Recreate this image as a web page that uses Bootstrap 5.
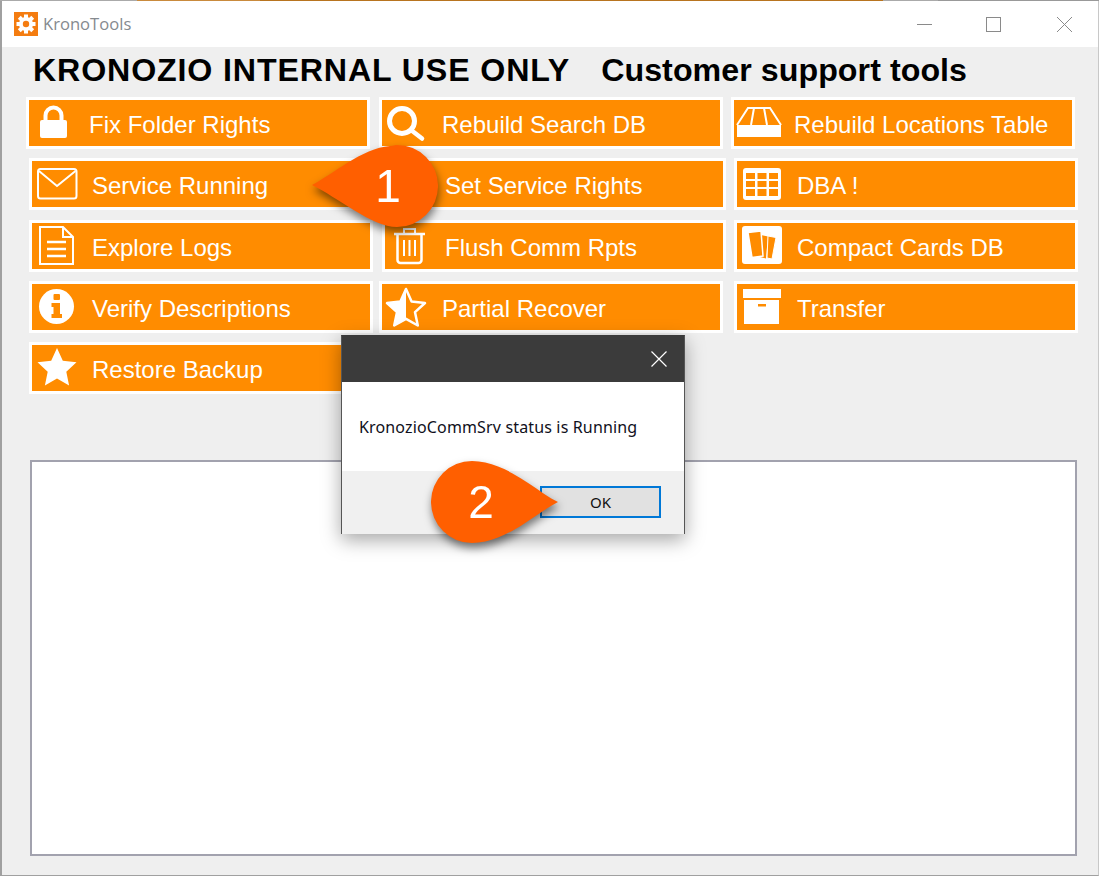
<!DOCTYPE html>
<html lang="en">
<head>
<meta charset="utf-8">
<title>KronoTools</title>
<link href="https://cdn.jsdelivr.net/npm/bootstrap@5.3.0/dist/css/bootstrap.min.css" rel="stylesheet">
<style>
html,body{margin:0;width:1099px;height:876px;overflow:hidden;background:#efefef;}
.shot{position:relative;width:1099px;height:876px;font-family:"Liberation Sans",Arial,sans-serif;}
.topline{height:1px;background:linear-gradient(90deg,#aaa 0 137px,#c98a3c 137px 260px,#b8741f 260px 883px,#aaa 883px 938px,#999 938px 1099px);}
.win{height:875px;border-left:2px solid #a0a0a0;border-right:1px solid #c8c8c8;border-bottom:1px solid #a0a0a0;background:#efefef;}
.titlebar{height:46px;background:#fff;padding-left:12px;}
.appicon{width:24px;height:24px;margin-top:-1px;}
.apptitle{font-family:"Open Sans","Noto Sans",sans-serif;font-size:16.6px;color:#858a8f;margin-left:5px;padding-top:1px;}
.winctl{margin-left:auto;padding-right:26px;gap:54px;}
.winctl svg{display:block;}
.winctl svg:last-child{margin-left:2px;}
.headline{height:50px;padding-left:31px;font-size:32.2px;font-weight:700;color:#000;line-height:46px;}
.headline span:first-child{letter-spacing:.85px;}
.headline span+span{margin-left:31px;letter-spacing:.05px;}
.btnrow{margin-top:9px;}
.btnrow.r3{margin-top:10px;}
.btnrow.r1{margin-top:0;}
.tool{display:flex;align-items:center;width:344px;height:52px;padding:0;border:3px solid #fff;border-radius:0;background:#ff8c00;color:#fff;font-size:24px;line-height:1;text-align:left;flex:none;}
.tool svg{width:50px;height:46px;margin-right:10px;flex:none;}
.tool span{padding-top:3px;}
.tool:hover{background:#ff8c00;color:#fff;border-color:#fff;}
.ml-a{margin-left:24px;}
.ml-b{margin-left:27px;}
.gap-s{margin-left:6px;}
.gap-m{margin-left:9px;}
.gap-e{margin-left:8px;}
.gap-n{margin-left:9px;}
.gap-l{margin-left:11px;}
.logbox{width:1047px;height:396px;margin:66px 0 0 28px;border:2px solid #a2a2ae;background:#fff;}
.msgbox{position:absolute;left:341px;top:335px;width:344px;height:199px;border:1px solid #555;border-top-color:#3a3a3a;background:#fff;box-shadow:0 6px 18px rgba(0,0,0,.35);font-family:"Noto Sans","Open Sans",sans-serif;}
.msghead{height:46px;background:#3b3b3b;padding-right:17px;}
.msgtext{height:89px;padding-left:17px;font-size:16px;letter-spacing:.15px;color:#101020;padding-top:33px;line-height:24px;}
.msgfoot{height:63px;background:#f0f0f0;padding:15px 23px 0 0;}
.okbtn{width:121px;height:32px;padding:0;border:2px solid #0078d7;border-radius:0;background:#e1e1e1;color:#111;font-size:15px;line-height:26px;}
.okbtn:hover{background:#e1e1e1;color:#111;border-color:#0078d7;}
.pin{position:absolute;filter:drop-shadow(1px 5px 4px rgba(0,0,0,.5));}
.pin-a{left:312px;top:145px;width:126px;height:82px;}
.pin-b{left:431px;top:461px;width:127px;height:82px;}
.pin svg{display:block;width:100%;height:100%;}
.pin-num{position:absolute;top:0;height:82px;width:82px;text-align:center;color:#fff;font-size:46px;line-height:82px;font-family:"Liberation Sans",Arial,sans-serif;}
.pin-a .pin-num{left:35px;}
.pin-b .pin-num{left:9px;}
</style>
</head>
<body>
<div class="shot">
<div class="topline"></div>
<div class="win">
  <div class="titlebar d-flex align-items-center">
    <svg class="appicon" viewBox="0 0 24 24"><rect width="24" height="24" fill="#f47c10"/><g fill="#fff"><circle cx="12" cy="12" r="7"/><rect x="10" y="2.500" width="4" height="19"/><rect x="2.500" y="10" width="19" height="4"/><rect x="10" y="2.500" width="4" height="19" transform="rotate(45 12 12)"/><rect x="10" y="2.500" width="4" height="19" transform="rotate(-45 12 12)"/></g><circle cx="12" cy="12" r="3.200" fill="#f47c10"/></svg>
    <span class="apptitle">KronoTools</span>
    <div class="winctl d-flex align-items-center">
      <svg width="15" height="15" viewBox="0 0 15 15"><path d="M0 7.500H15" stroke="#8a8a8a" fill="none"/></svg>
      <svg width="15" height="15" viewBox="0 0 15 15"><rect x=".5" y=".5" width="14" height="14" stroke="#8a8a8a" fill="none"/></svg>
      <svg width="15" height="15" viewBox="0 0 15 15"><path d="M0 0L15 15M15 0L0 15" stroke="#8a8a8a" fill="none"/></svg>
    </div>
  </div>
  <div class="headline"><span>KRONOZIO INTERNAL USE ONLY</span><span>Customer support tools</span></div>

  <div class="btnrow r1 d-flex">
    <button class="btn tool ml-a" type="button"><svg viewBox="0 0 50 46"><path d="M11 22a2 2 0 0 1 2-2h23a2 2 0 0 1 2 2v14a2 2 0 0 1-2 2H13a2 2 0 0 1-2-2z" fill="#fff"/><path d="M16.500 21v-5.500a8 8 0 0 1 16 0V21" fill="none" stroke="#fff" stroke-width="4"/></svg><span>Fix Folder Rights</span></button>
    <button class="btn tool gap-m" type="button"><svg viewBox="0 0 50 46"><circle cx="20" cy="21" r="12.500" fill="none" stroke="#fff" stroke-width="5"/><path d="M29 30L40 38.500" stroke="#fff" stroke-width="4.500" stroke-linecap="round"/></svg><span>Rebuild Search DB</span></button>
    <button class="btn tool gap-e" type="button"><svg viewBox="0 0 50 46"><path d="M3 25L14 8H36L47 25" fill="none" stroke="#fff" stroke-width="2"/><path d="M20 8L17 25M30 8L33 25" stroke="#fff" stroke-width="2"/><rect x="3" y="25" width="44" height="12" fill="#fff"/></svg><span>Rebuild Locations Table</span></button>
  </div>

  <div class="btnrow d-flex">
    <button class="btn tool ml-b" type="button"><svg viewBox="0 0 50 46"><rect x="6" y="8" width="38.500" height="29.500" rx="2.500" fill="none" stroke="#fff" stroke-width="2"/><path d="M7 10L25 25L43.500 10" fill="none" stroke="#fff" stroke-width="2"/></svg><span>Service Running</span></button>
    <button class="btn tool gap-n" type="button"><svg viewBox="0 0 50 46"></svg><span>Set Service Rights</span></button>
    <button class="btn tool gap-e" type="button"><svg viewBox="0 0 50 46"><rect x="6" y="7" width="38" height="32" rx="3" fill="#fff"/><g fill="#ff8c00"><rect x="9" y="12" width="9" height="6"/><rect x="20.500" y="12" width="9" height="6"/><rect x="32" y="12" width="9" height="6"/><rect x="9" y="20" width="9" height="6"/><rect x="20.500" y="20" width="9" height="6"/><rect x="32" y="20" width="9" height="6"/><rect x="9" y="28" width="9" height="7"/><rect x="20.500" y="28" width="9" height="7"/><rect x="32" y="28" width="9" height="7"/></g></svg><span>DBA !</span></button>
  </div>

  <div class="btnrow r3 d-flex">
    <button class="btn tool ml-b" type="button"><svg viewBox="0 0 50 46"><path d="M8 4H31L41 14V41H8z" fill="none" stroke="#fff" stroke-width="2"/><path d="M31 4V14H41" fill="none" stroke="#fff" stroke-width="2"/><path d="M15 19H34M15 26H34M15 33H34" stroke="#fff" stroke-width="2.500"/></svg><span>Explore Logs</span></button>
    <button class="btn tool gap-n" type="button"><svg viewBox="0 0 50 46"><path d="M9 11H40" stroke="#fff" stroke-width="2.500"/><path d="M19 10V6H30V10" fill="none" stroke="#fff" stroke-width="2"/><path d="M12.500 12V37a3 3 0 0 0 3 3H33.500a3 3 0 0 0 3-3V12" fill="none" stroke="#fff" stroke-width="2.500"/><path d="M19 17V33M24.500 17V33M30 17V33" stroke="#fff" stroke-width="2"/></svg><span>Flush Comm Rpts</span></button>
    <button class="btn tool gap-e" type="button"><svg viewBox="0 0 50 46"><rect x="5" y="3" width="40" height="38" rx="3" fill="#fff"/><path d="M24 12l7 1.500-2 22-6-1.500z" fill="#ff8c00"/><path d="M31 13l8 1.500-4 21.500-5-1z" fill="#ff8c00" stroke="#fff"/><path d="M11 9.500l13-1.500 2 25-11 1.500z" fill="#ff8c00" stroke="#fff" stroke-width="1.500"/></svg><span>Compact Cards DB</span></button>
  </div>

  <div class="btnrow d-flex">
    <button class="btn tool ml-b" type="button"><svg viewBox="0 0 50 46"><circle cx="24.500" cy="22.500" r="17.500" fill="#fff"/><rect x="21.500" y="10" width="6.500" height="6" rx="1" fill="#ff8c00"/><path d="M19.500 19H28V30H30V34H19.500V30H21.500V23H19.500z" fill="#ff8c00"/></svg><span>Verify Descriptions</span></button>
    <button class="btn tool gap-s" type="button"><svg viewBox="0 0 50 46"><path d="M24 5L29.600 17.500L43 19L33 28.200L35.800 41.500L24 34.800L12.200 41.500L15 28.200L5 19L18.400 17.500z" fill="none" stroke="#fff" stroke-width="2.500" stroke-linejoin="round"/><path d="M24 5L18.400 17.500L5 19L15 28.200L12.200 41.500L24 34.800z" fill="#fff"/></svg><span>Partial Recover</span></button>
    <button class="btn tool gap-l" type="button"><svg viewBox="0 0 50 46"><rect x="6" y="5" width="38" height="9" fill="#fff"/><path d="M7 16H42V40H7z" fill="#fff"/><rect x="21" y="20" width="8" height="2.500" fill="#ff8c00"/></svg><span>Transfer</span></button>
  </div>

  <div class="btnrow d-flex">
    <button class="btn tool ml-b" type="button"><svg viewBox="0 0 50 46"><path d="M25 3L30.800 15.800L44.500 17.300L34.300 26.700L37.100 40.500L25 33.500L12.900 40.500L15.700 26.700L5.500 17.300L19.200 15.800z" fill="#fff"/></svg><span>Restore Backup</span></button>
  </div>

  <div class="logbox"></div>
</div>

<div class="msgbox" role="dialog">
  <div class="msghead d-flex align-items-center justify-content-end"><svg width="16" height="16" viewBox="0 0 16 16"><path d="M.5 .5L15.500 15.500M15.500 .5L.5 15.500" stroke="#fff" stroke-width="1.200" fill="none"/></svg></div>
  <div class="msgtext">KronozioCommSrv status is Running</div>
  <div class="msgfoot d-flex justify-content-end"><button class="btn okbtn" type="button">OK</button></div>
</div>

<div class="pin pin-a"><svg viewBox="0 0 126 82"><path d="M0 40C20 30 50 3 78 1C86 0 85 0 85 0A41 41 0 1 1 85 82C60 82 25 52 0 40z" fill="#ff5f00"/></svg><span class="pin-num">1</span></div>
<div class="pin pin-b"><svg viewBox="0 0 127 82"><path d="M127 41C105 30 75 0 41 0A41 41 0 1 0 41 82C75 82 105 52 127 41z" fill="#ff5f00"/></svg><span class="pin-num">2</span></div>
</div>
<script src="https://cdn.jsdelivr.net/npm/bootstrap@5.3.0/dist/js/bootstrap.bundle.min.js"></script>
</body>
</html>
